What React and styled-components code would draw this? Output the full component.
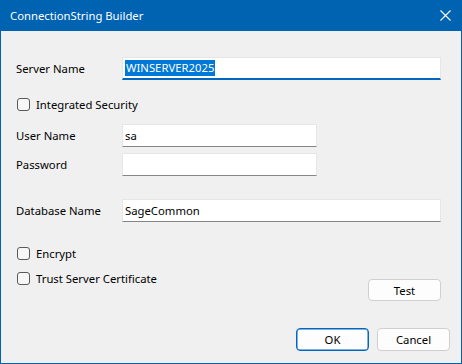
import styled, { createGlobalStyle } from "styled-components"

const GlobalStyle = createGlobalStyle`
    html, body {
        margin: 0;
        padding: 0;
        background: #f0f0f0;
    }
    * {
        box-sizing: border-box;
    }
`

const Janela = styled.div`
    width: 462px;
    height: 364px;
    display: flex;
    flex-direction: column;
    background: #f0f0f0;
    border: 1px solid #0063b1;
    border-top: 0;
    font-family: "Noto Sans", "Open Sans", sans-serif;
    font-size: 11.3px;
    color: #000;
`

const BarraTitulo = styled.div`
    height: 31px;
    margin: 0 -1px;
    padding: 0 11px 0 10px;
    background: #0063b1;
    color: #fff;
    display: flex;
    align-items: center;
    justify-content: space-between;
    font-size: 11.3px;
`

const BotaoFechar = styled.button`
    background: transparent;
    border: 0;
    padding: 0;
    width: 12px;
    height: 12px;
    display: flex;
    align-items: center;
    justify-content: center;
    cursor: pointer;
`

const Conteudo = styled.div`
    flex: 1;
    display: flex;
    flex-direction: column;
    padding: 26px 11px 0 15px;
`

const Linha = styled.div`
    display: flex;
    align-items: center;
    margin-top: ${props => props.$topo || 0}px;
`

const Rotulo = styled.label`
    width: 106px;
    flex-shrink: 0;
`

const CaixaTexto = styled.div`
    width: ${props => props.$largura}px;
    height: 23px;
    background: #fff;
    border: 1px solid #e6e6e6;
    border-bottom: ${props => props.$foco ? '2px solid #0067c0' : '1px solid #868686'};
    display: flex;
    align-items: center;
    padding-left: 2px;
`

const Selecao = styled.span`
    background: #0078d7;
    color: #fff;
    padding: 1px 1px;
    line-height: 14px;
`

const Verificacao = styled.label`
    display: flex;
    align-items: center;
    height: 20px;
    gap: 6px;
    padding-left: 1px;
    margin-top: ${props => props.$topo || 0}px;
`

const Quadrado = styled.span`
    width: 13px;
    height: 13px;
    border: 1px solid #5a5a5a;
    border-radius: 3px;
    background: #f7f7f7;
`

const LinhaTeste = styled.div`
    display: flex;
    justify-content: space-between;
    align-items: flex-start;
    margin-top: 5px;
    padding-right: 9px;
`

const Botao = styled.button`
    width: 73px;
    height: ${props => props.$altura || 23}px;
    margin-top: ${props => props.$topo || 0}px;
    background: #fdfdfd;
    border: 1px solid ${props => props.$padrao ? '#0067c0' : '#d0d0d0'};
    box-shadow: ${props => props.$padrao ? 'inset 0 0 0 0.5px #0067c0' : 'none'};
    border-radius: 4px;
    font-family: "Noto Sans", "Open Sans", sans-serif;
    font-size: 11.3px;
    color: #000;
    padding: 0;
`

const Rodape = styled.div`
    display: flex;
    justify-content: flex-end;
    gap: 8px;
    margin-top: 27px;
`

const Campo = ({ rotulo, largura, topo, foco, children }) => (
    <Linha $topo={topo}>
        <Rotulo>{rotulo}</Rotulo>
        <CaixaTexto $largura={largura} $foco={foco}>{children}</CaixaTexto>
    </Linha>
)

const Caixa = ({ texto, topo }) => (
    <Verificacao $topo={topo}>
        <Quadrado />
        <span>{texto}</span>
    </Verificacao>
)

export default function App() {
    return (
        <>
            <GlobalStyle />
            <Janela>
                <BarraTitulo>
                    <span>ConnectionString Builder</span>
                    <BotaoFechar aria-label="Fechar">
                        <svg width="11" height="11" viewBox="0 0 11 11">
                            <path d="M0.5 0.5 L10.5 10.5 M10.5 0.5 L0.5 10.5" stroke="#fff" strokeWidth="1.1" />
                        </svg>
                    </BotaoFechar>
                </BarraTitulo>
                <Conteudo>
                    <Campo rotulo="Server Name" largura={319} foco>
                        <Selecao>WINSERVER2025</Selecao>
                    </Campo>
                    <Caixa texto="Integrated Security" topo={14} />
                    <Campo rotulo="User Name" largura={195} topo={10}>sa</Campo>
                    <Campo rotulo="Password" largura={195} topo={6} />
                    <Campo rotulo="Database Name" largura={319} topo={23}>SageCommon</Campo>
                    <Caixa texto="Encrypt" topo={21} />
                    <LinhaTeste>
                        <Caixa texto="Trust Server Certificate" />
                        <Botao $altura={22} $topo={11}>Test</Botao>
                    </LinhaTeste>
                    <Rodape>
                        <Botao $padrao>OK</Botao>
                        <Botao>Cancel</Botao>
                    </Rodape>
                </Conteudo>
            </Janela>
        </>
    )
}
